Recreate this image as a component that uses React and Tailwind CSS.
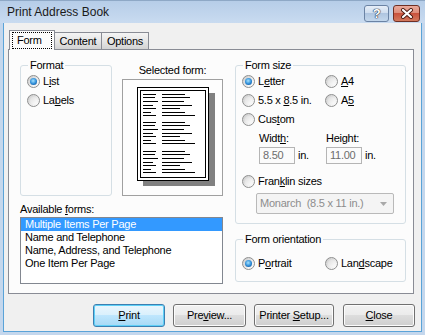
import React from "react";

const U = ({ children }) => <span className="underline underline-offset-[1px]">{children}</span>;

function Radio({ checked }) {
  return (
    <span className="flex h-[13px] w-[13px] shrink-0 items-center justify-center rounded-full border border-[#8e8f8f] bg-[linear-gradient(135deg,#c9c9c9,#f3f3f3_70%,#ffffff)]">
      {checked ? (
        <span className="h-[7px] w-[7px] rounded-full bg-[radial-gradient(circle_at_45%_40%,#a6e3ff_0%,#2a8ad6_55%,#0d3b78_100%)]" />
      ) : (
        <span className="h-[7px] w-[7px] rounded-full bg-[linear-gradient(135deg,#dedede,#fdfdfd)]" />
      )}
    </span>
  );
}

function RadioRow({ checked, children, className = "" }) {
  return (
    <div className={"flex h-[19px] items-center gap-[3px] " + className}>
      <Radio checked={checked} />
      <span className="whitespace-nowrap">{children}</span>
    </div>
  );
}

function Group({ title, className = "", children }) {
  return (
    <fieldset className={"rounded-[3px] border border-[#d5dfe5] " + className}>
      <legend className="ml-[7px] px-[2px] leading-[13px]">{title}</legend>
      {children}
    </fieldset>
  );
}

function Btn({ children, w, def = false, className = "" }) {
  return (
    <div
      className={
        "flex h-[23px] items-center justify-center rounded-[3px] border " +
        (def
          ? "border-[#3c7fb1] bg-[linear-gradient(#eaf6fd,#d9f0fc_50%,#bee6fd_50%,#a7d9f5)] shadow-[inset_0_0_0_1px_#5ed0f7] "
          : "border-[#707070] bg-[linear-gradient(#f2f2f2,#ebebeb_50%,#dddddd_50%,#cfcfcf)] shadow-[inset_0_0_0_1px_#fcfcfc] ") +
        w +
        " " +
        className
      }
    >
      <span className="whitespace-nowrap">{children}</span>
    </div>
  );
}

function Preview() {
  const left = [13, 12, 15, 10, 13, 8, 13];
  const right = [23, 28, 22, 30, 18, 23, 33];
  const rowY = [0, 3, 7, 11, 14, 18, 21];
  const groups = [7, 35, 64];
  return (
    <svg width="79" height="100" viewBox="0 0 79 100" className="block">
      <rect x="6" y="6" width="72" height="93" fill="#808080" />
      <rect x="0.5" y="0.5" width="71" height="93" fill="#fff" stroke="#000" />
      <rect x="3.5" y="3.5" width="65" height="87" fill="#fff" stroke="#000" />
      {groups.map((g) =>
        rowY.map((r, i) => (
          <React.Fragment key={g + "-" + i}>
            <rect x="6" y={g + r} width={left[i]} height="1" fill="#000" />
            <rect x="25" y={g + r} width={right[i]} height="1" fill="#000" />
          </React.Fragment>
        ))
      )}
    </svg>
  );
}

export default function App() {
  return (
    <div className="flex h-[335px] w-[425px] flex-col overflow-hidden border-t border-[#8ea8c6] bg-[#c4d7ed] font-['Liberation_Sans',Arial,sans-serif] text-[11px] leading-[13px] tracking-[-0.25px] text-black">
      {/* Title bar */}
      <div className="flex h-[22px] shrink-0 items-start bg-[linear-gradient(#b6cde8,#c9dbf0)]">
        <div className="pl-[7px] pt-[4px] text-[12px] leading-[15px] tracking-normal text-[#1a1a1a]">Print Address Book</div>
        <div className="ml-auto flex gap-[4px] pr-[5px] pt-[4px]">
          <div className="flex h-[17px] w-[25px] items-center justify-center rounded-[3px] border border-[#6b83a4] bg-[linear-gradient(#e6eef8,#cddcee_50%,#afc5e0_50%,#c3d7ec)]">
            <span className="text-[13px] font-bold leading-[13px] text-white [text-shadow:0_0_1px_#1d2c44,0_0_1px_#1d2c44,0_0_1px_#1d2c44]">?</span>
          </div>
          <div className="flex h-[17px] w-[27px] items-center justify-center rounded-[3px] border border-[#6e2f24] bg-[linear-gradient(#eaaa9c,#dc8a77_50%,#c9523d_50%,#d3795d)]">
            <svg width="14" height="11" viewBox="0 0 14 11">
              <path d="M3 2 L11 9 M11 2 L3 9" stroke="#4a1a12" strokeWidth="4" strokeLinecap="round" />
              <path d="M3 2 L11 9 M11 2 L3 9" stroke="#fff" strokeWidth="2.2" strokeLinecap="round" />
            </svg>
          </div>
        </div>
      </div>

      {/* Client area */}
      <div className="mx-[3px] mb-[3px] flex flex-1 flex-col border border-t-0 border-[#5aa3d8] bg-[#f0f0f0]">
        {/* Tabs */}
        <div className="relative z-10 -mb-px ml-[5px] mt-[7px] flex h-[20px] items-end">
          <div className="h-[20px] w-[46px] border border-b-0 border-[#898c95] bg-[#fcfcfc]">
            <div className="mx-[2px] mt-[1px] flex h-[17px] items-center border border-dotted border-black pl-[4px]">Form</div>
          </div>
          <div className="flex h-[18px] w-[47px] items-center justify-center border border-l-0 border-[#898c95] bg-[linear-gradient(#f4f4f4,#e6e6e6_50%,#d3d3d3)] pt-[1px]">
            Content
          </div>
          <div className="flex h-[18px] w-[47px] items-center justify-center border border-l-0 border-[#898c95] bg-[linear-gradient(#f4f4f4,#e6e6e6_50%,#d3d3d3)] pt-[1px]">
            Options
          </div>
        </div>

        {/* Tab panel */}
        <div className="ml-[4px] flex h-[245px] w-[406px] gap-[12px] border border-[#898c95] bg-[#fcfcfc] pl-[11px]">
          {/* Left column */}
          <div className="flex w-[203px] flex-col">
            <div className="flex">
              <Group title="Format" className="mt-[9px] h-[137px] w-[92px]">
                <div className="pl-[6px]">
                  <RadioRow checked>
                    L<U>i</U>st
                  </RadioRow>
                  <RadioRow>
                    La<U>b</U>els
                  </RadioRow>
                </div>
              </Group>
              <div className="ml-[10px] flex w-[101px] flex-col items-center">
                <div className="mt-[14px] whitespace-nowrap">Selected form:</div>
                <div className="mt-[2px] h-[117px] w-full border border-[#a0a0a0] bg-[#fdfdfd] pl-[14px] pt-[7px]">
                  <Preview />
                </div>
              </div>
            </div>
            <div className="mt-[7px]">
              Available <U>f</U>orms:
            </div>
            <div className="mt-[1px] h-[67px] w-[203px] border border-[#828790] bg-white">
              <div className="h-[13px] bg-[#3399ff] pl-[4px] text-white">Multiple Items Per Page</div>
              <div className="h-[13px] pl-[4px]">Name and Telephone</div>
              <div className="h-[13px] pl-[4px]">Name, Address, and Telephone</div>
              <div className="h-[13px] pl-[4px]">One Item Per Page</div>
            </div>
          </div>

          {/* Right column */}
          <div className="flex w-[171px] flex-col">
            <Group title="Form size" className="mt-[9px] h-[165px]">
              <div className="pl-[6px]">
                <div className="flex">
                  <div className="w-[83px]">
                    <RadioRow checked>
                      L<U>e</U>tter
                    </RadioRow>
                    <RadioRow>
                      5.5 x <U>8</U>.5 in.
                    </RadioRow>
                  </div>
                  <div>
                    <RadioRow>
                      <U>A</U>4
                    </RadioRow>
                    <RadioRow>
                      A<U>5</U>
                    </RadioRow>
                  </div>
                </div>
                <RadioRow>
                  Cus<U>t</U>om
                </RadioRow>
                <div className="mt-[3px] flex pl-[17px]">
                  <div className="w-[67px]">
                    <div>
                      Widt<U>h</U>:
                    </div>
                    <div className="mt-[2px] flex items-center">
                      <div className="flex h-[17px] w-[36px] items-center border border-[#b5b5b5] bg-[#fbfbfb] pl-[3px] text-[#6d6d6d]">8.50</div>
                      <span className="ml-[3px]">in.</span>
                    </div>
                  </div>
                  <div>
                    <div>Height:</div>
                    <div className="mt-[2px] flex items-center">
                      <div className="flex h-[17px] w-[36px] items-center border border-[#b5b5b5] bg-[#fbfbfb] pl-[3px] text-[#6d6d6d]">11.00</div>
                      <span className="ml-[3px]">in.</span>
                    </div>
                  </div>
                </div>
                <RadioRow className="mt-[8px]">
                  Fran<U>k</U>lin sizes
                </RadioRow>
                <div className="ml-[14px] mt-[2px] flex h-[21px] w-[138px] items-center rounded-[2px] border border-[#b9b9b9] bg-[#f4f4f4] pl-[3px] pr-[6px] text-[#8d8d8d]">
                  <span className="whitespace-pre">Monarch  (8.5 x 11 in.)</span>
                  <svg width="7" height="4" viewBox="0 0 7 4" className="ml-auto">
                    <path d="M0 0 H7 L3.5 4 Z" fill="#a8a8a8" />
                  </svg>
                </div>
              </div>
            </Group>
            <Group title="Form orientation" className="mt-[9px] h-[49px]">
              <div className="mt-[8px] flex pl-[6px]">
                <RadioRow checked className="w-[83px]">
                  P<U>o</U>rtrait
                </RadioRow>
                <RadioRow>
                  Lan<U>d</U>scape
                </RadioRow>
              </div>
            </Group>
          </div>
        </div>

        {/* Buttons */}
        <div className="mt-[10px] flex justify-end pr-[6px]">
          <Btn w="w-[72px]" def>
            <U>P</U>rint
          </Btn>
          <Btn w="w-[73px]" className="ml-[8px]">
            Pre<U>v</U>iew...
          </Btn>
          <Btn w="w-[80px]" className="ml-[8px]">
            Printer <U>S</U>etup...
          </Btn>
          <Btn w="w-[72px]" className="ml-[9px]">
            <U>C</U>lose
          </Btn>
        </div>
      </div>
    </div>
  );
}
